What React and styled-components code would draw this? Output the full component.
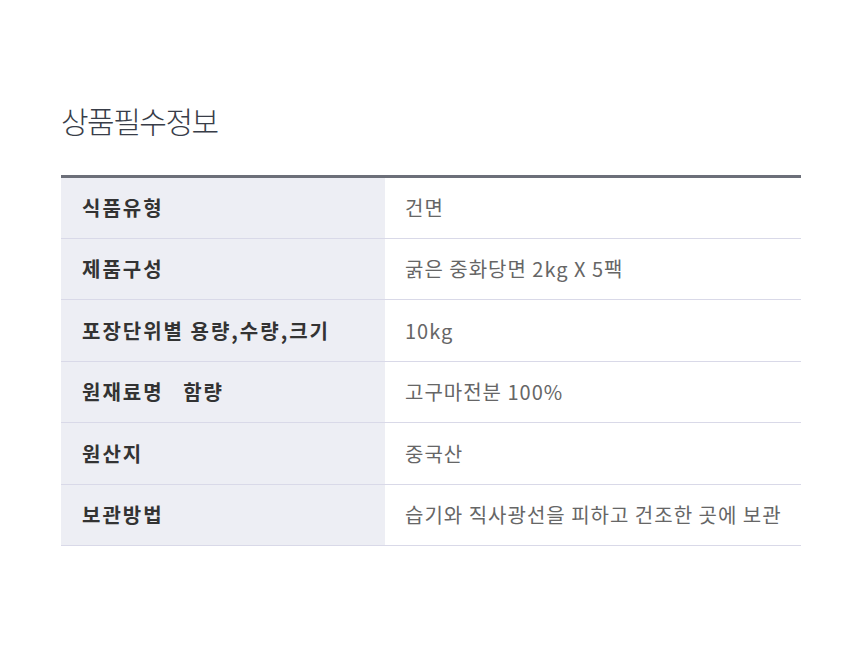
import React from 'react';
import styled, {createGlobalStyle} from "styled-components";

const rows = [
  ["식품유형", "건면"],
  ["제품구성", "굵은 중화당면 2kg X 5팩"],
  ["포장단위별 용량,수량,크기", "10kg"],
  ["원재료명\u00a0\u00a0\u00a0함량", "고구마전분 100%"],
  ["원산지", "중국산"],
  ["보관방법", "습기와 직사광선을 피하고 건조한 곳에 보관"],
];

const App = () => {
  return (
    <Page>
      <GlobalStyle/>
      <Title>상품필수정보</Title>
      <Table>
        <tbody>
          {rows.map(([label, value]) => (
            <tr key={label}>
              <Th>{label}</Th>
              <Td>{value}</Td>
            </tr>
          ))}
        </tbody>
      </Table>
    </Page>
  );
};

export default App;

const GlobalStyle = createGlobalStyle`
  body {
    margin: 0;
    background: #fff;
    font-family: "Noto Sans CJK KR", "Noto Sans", sans-serif;
  }
`

const Page = styled.div`
  width: 860px;
  height: 655px;
  padding: 100px 59px 0 61px;
  box-sizing: border-box;
`

const Title = styled.h2`
  margin: 0 0 35px 0;
  font-size: 30px;
  font-weight: 300;
  line-height: 40px;
  color: #383d48;
  letter-spacing: -1.5px;
`

const Table = styled.table`
  width: 740px;
  border-collapse: collapse;
  border-top: 3px solid #6c6f79;
`

const Th = styled.th`
  width: 324px;
  height: 61.5px;
  padding: 0 0 0 21px;
  box-sizing: border-box;
  background: #edeef4;
  border-bottom: 1px solid #d9d9e8;
  text-align: left;
  font-size: 20px;
  font-weight: 700;
  color: #333;
  letter-spacing: 2px;
`

const Td = styled.td`
  height: 61.5px;
  padding: 0 0 0 20px;
  box-sizing: border-box;
  border-bottom: 1px solid #d9d9e8;
  font-size: 20px;
  font-weight: 400;
  color: #666;
  letter-spacing: 1px;
`
